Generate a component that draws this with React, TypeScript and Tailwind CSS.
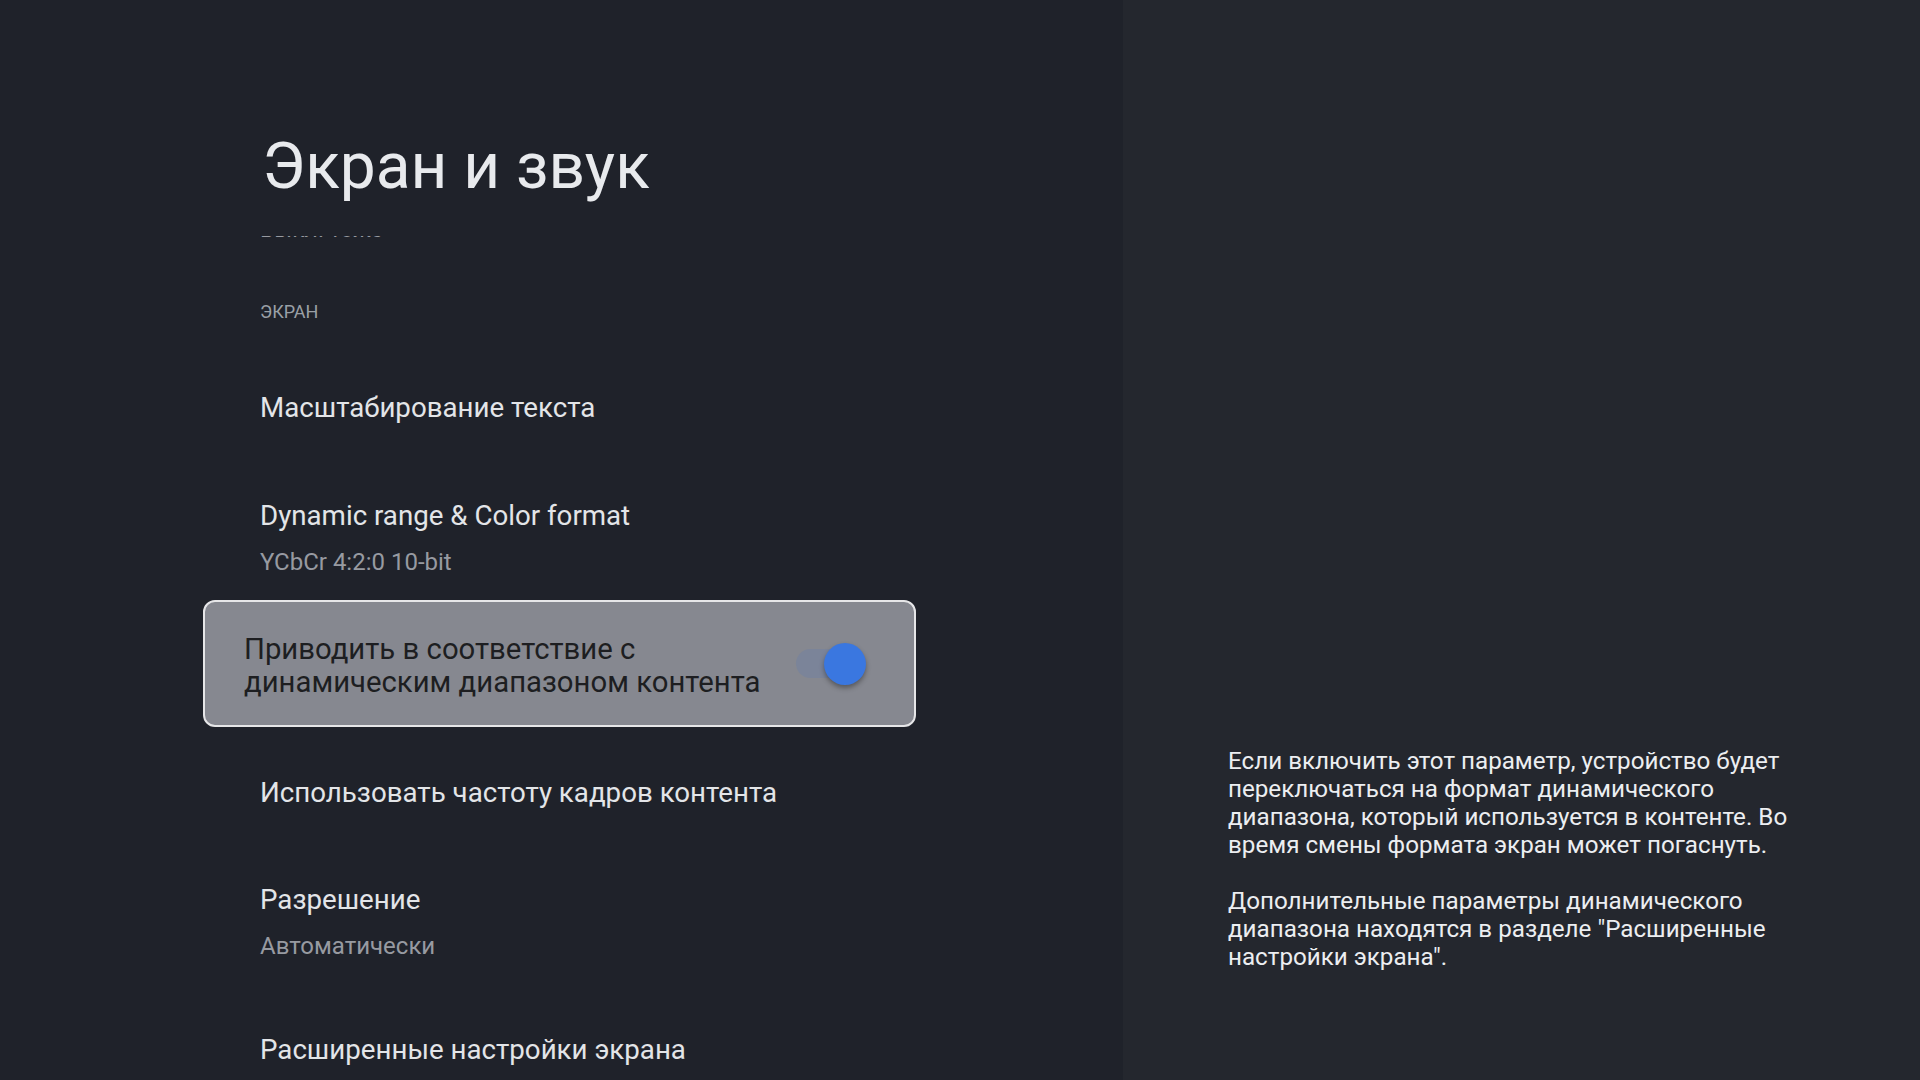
import React from 'react';

function Item({ title, sub, mt }: { title: string; sub?: string; mt: string }) {
  return (
    <div className={`${mt} flex flex-col`}>
      <div className="h-[40px] flex items-center text-[27.7px] text-[#e3e5e8]">{title}</div>
      {sub && <div className="mt-[11px] h-[30px] flex items-center text-[24px] text-[#979aa1]">{sub}</div>}
    </div>
  );
}

function Toggle() {
  return (
    <div className="relative w-[72px] h-[44px] flex items-center">
      <div className="ml-[2px] h-[29px] w-[54px] rounded-full bg-[#7b8499]" />
      <div className="absolute right-0 top-px h-[42px] w-[42px] rounded-full bg-[#3a77e0] shadow-[0_3px_5px_rgba(0,0,0,0.35)]" />
    </div>
  );
}

export default function App() {
  return (
    <div className="flex h-[1080px] w-[1920px] overflow-hidden font-['Roboto',sans-serif]">
      <div className="w-[1123px] shrink-0 bg-[#1f222a] flex flex-col">
        <h1 className="ml-[262px] mt-[135px] h-[64px] leading-[64px] text-[64px] text-[#e8eaed] font-normal">Экран и звук</h1>
        <div className="mt-[37px] pl-[260px] flex-1 overflow-hidden flex flex-col">
          <div className="-mt-[18px] h-[24px] leading-[24px] text-[23px] text-[#979aa1]">Выкл. тоже</div>
          <div className="mt-[57px] h-[24px] flex items-center text-[18px] text-[#9aa0a6]">ЭКРАН</div>
          <Item mt="mt-[65px]" title="Масштабирование текста" />
          <Item mt="mt-[68px]" title="Dynamic range & Color format" sub="YCbCr 4:2:0 10-bit" />
          <div className="mt-[23px] -ml-[57px] w-[713px] h-[127px] shrink-0 rounded-[12px] border-2 border-[#e6e6e8] bg-[#868890] pl-[39px] pr-[48px] flex items-center justify-between">
            <div className="pt-[5px] text-[29.3px] leading-[33px] text-[#1d1e21]">
              Приводить в соответствие с<br />динамическим диапазоном контента
            </div>
            <Toggle />
          </div>
          <Item mt="mt-[46px]" title="Использовать частоту кадров контента" />
          <Item mt="mt-[67px]" title="Разрешение" sub="Автоматически" />
          <Item mt="mt-[69px]" title="Расширенные настройки экрана" />
        </div>
      </div>
      <div className="flex-1 bg-[#24272e] pl-[105px] pt-[747px]">
        <div className="w-[575px] text-[24.2px] leading-[28px] text-[#eceef1]">
          <p className="mb-[28px]">
            Если включить этот параметр, устройство будет переключаться на формат динамического диапазона, который используется в контенте. Во время смены формата экран может погаснуть.
          </p>
          <p>
            Дополнительные параметры динамического диапазона находятся в разделе "Расширенные настройки экрана".
          </p>
        </div>
      </div>
    </div>
  );
}
